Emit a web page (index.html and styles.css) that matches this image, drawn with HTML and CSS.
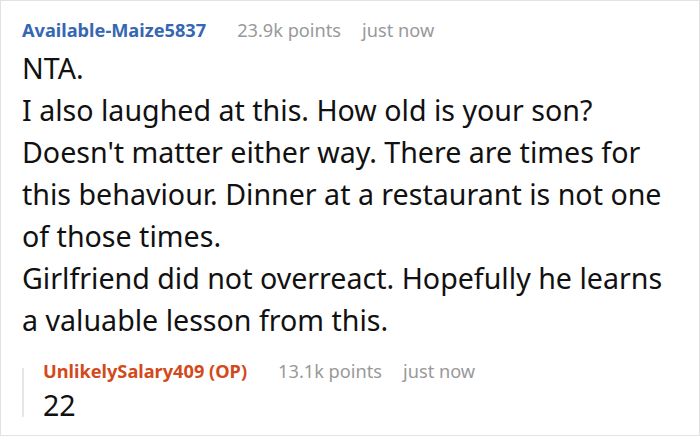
FILE: index.html
```html
<!DOCTYPE html>
<html>
<head>
<meta charset="utf-8">
<link rel="stylesheet" href="styles.css">
</head>
<body>
<div class="frame">
  <div class="comment">
    <div class="meta">
      <span class="user">Available-Maize5837</span>
      <span class="info">23.9k points</span>
      <span class="info">just now</span>
    </div>
    <div class="body">
      <p>NTA.</p>
      <p>I also laughed at this. How old is your son?</p>
      <p>Doesn't matter either way. There are times for this behaviour. Dinner at a restaurant is not one of those times.</p>
      <p>Girlfriend did not overreact. Hopefully he learns a valuable lesson from this.</p>
    </div>
  </div>
  <div class="reply">
    <div class="thread"></div>
    <div class="reply-content">
      <div class="meta">
        <span class="user op">UnlikelySalary409 (OP)</span>
        <span class="info">13.1k points</span>
        <span class="info">just now</span>
      </div>
      <div class="body">
        <p>22</p>
      </div>
    </div>
  </div>
</div>
</body>
</html>
```

FILE: styles.css
```css
html, body {
  margin: 0;
  padding: 0;
  background: #fff;
}
.frame {
  width: 700px;
  height: 436px;
  box-sizing: border-box;
  border: 1px solid #e2e2e2;
  padding: 14px 34px 0 21px;
  font-family: "Noto Sans", sans-serif;
  color: #111;
}
.meta {
  display: flex;
  gap: 21px;
  align-items: baseline;
  font-size: 18.2px;
  line-height: 30px;
}
.user {
  font-weight: 700;
  color: #3567b3;
  margin-right: 10px;
}
.user.op {
  color: #d24a1c;
}
.info {
  color: #999;
}
.comment .body {
  margin-top: 2px;
}
.body p {
  margin: 0;
  font-size: 28.6px;
  line-height: 42px;
}
.reply {
  display: flex;
  margin-top: 17px;
}
.thread {
  width: 2px;
  flex: none;
  background: #e6e6e6;
  margin: 10px 19px 9px 0;
}
.reply .meta {
  line-height: 26px;
}
```
